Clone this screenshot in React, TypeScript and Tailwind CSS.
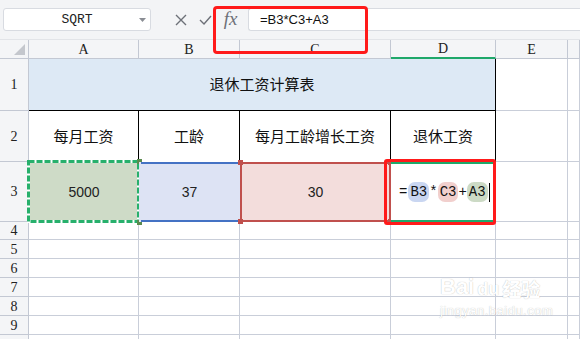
import React from "react"

const grid = "border-r border-b border-[#c9ced9]"
const head = "bg-[#f4f5f7] border-r border-b border-[#c3c8d3] flex items-center justify-center text-[14px] text-[#222] font-['Liberation_Serif',serif]"
const cjk = "font-['Noto_Sans_CJK_SC','Noto_Sans',sans-serif]"

function Handle({ className }: { className: string }) {
    return <div className={`absolute w-[5px] h-[5px] ${className}`} />
}

function Marquee() {
    return (
        <svg className="absolute left-[-2px] top-[-2px] w-[113px] h-[63px] overflow-visible" viewBox="0 0 113 63">
            <rect x="1.5" y="1.5" width="110" height="60" fill="none" stroke="#ffffff" strokeWidth="3" />
            <rect x="1.5" y="1.5" width="110" height="60" fill="none" stroke="#27b06c" strokeWidth="3" strokeDasharray="6 2" />
        </svg>
    )
}

export default function App() {
    const emptyRows = [4, 5, 6, 7, 8, 9, 0]
    return (
        <div className="relative w-[580px] h-[339px] overflow-hidden bg-white">
            {/* formula toolbar */}
            <div className="h-[40px] bg-[#f3f4f6] border-b border-[#e2e4e8] flex items-center">
                <div className="ml-[3px] w-[148px] h-[23px] bg-white border border-[#d8dbe1] rounded-[3px] flex items-center relative">
                    <span className="flex-1 text-center text-[13px] text-[#222] font-['Liberation_Mono',monospace]">SQRT</span>
                    <svg className="absolute right-[4px] top-[9px]" width="7" height="4" viewBox="0 0 7 4">
                        <path d="M0 0h7L3.5 4z" fill="#8a8d94" />
                    </svg>
                </div>
                <div className="w-[62px] flex items-center justify-end gap-[12px] pr-[1px]">
                    <svg width="12" height="12" viewBox="0 0 12 12" stroke="#6d7078" strokeWidth="1.4" fill="none">
                        <path d="M1 1l10 10M11 1L1 11" />
                    </svg>
                    <svg width="13" height="10" viewBox="0 0 13 10" stroke="#6d7078" strokeWidth="1.4" fill="none">
                        <path d="M1 5l4 4 7-8" />
                    </svg>
                </div>
                <div className="w-[35px] flex items-center justify-center italic text-[19px] text-[#6d7078] font-['Liberation_Serif',serif]">fx</div>
                <div className="flex-1 h-[23px] bg-white border-y border-l border-[#d8dbe1] rounded-l-[3px] flex items-center pl-[11px] text-[13px] text-[#111] font-['Liberation_Sans',sans-serif]">
                    =B3*C3+A3
                </div>
            </div>

            {/* sheet */}
            <div className="grid grid-cols-[29px_110px_101px_151px_105px_72px_1fr] grid-rows-[19px_52px_51px_60px_18px_19px_19px_19px_19px_19px_19px]">
                {/* column headers */}
                <div className={`${head} relative`}>
                    <svg className="absolute right-[3px] bottom-[3px]" width="11" height="11" viewBox="0 0 11 11">
                        <path d="M11 0v11H0z" fill="#c4c7cd" />
                    </svg>
                </div>
                <div className={head}>A</div>
                <div className={head}>B</div>
                <div className={head}>C</div>
                <div className={`${head} bg-[#d3d6de] text-[#1fa86a] border-b-[2px] border-b-[#1fa86a]`}>D</div>
                <div className={head}>E</div>
                <div className={head}></div>

                {/* row 1 */}
                <div className={head}>1</div>
                <div className={`col-span-4 bg-[#dde9f5] border-r border-b border-black flex items-center justify-center text-[15px] text-[#111] ${cjk}`}>
                    退休工资计算表
                </div>
                <div className={grid}></div>
                <div className={grid}></div>

                {/* row 2 */}
                <div className={head}>2</div>
                {["每月工资", "工龄", "每月工龄增长工资", "退休工资"].map((t) => (
                    <div key={t} className={`border-r border-black flex items-center justify-center text-[15px] text-[#111] ${cjk}`}>
                        {t}
                    </div>
                ))}
                <div className={grid}></div>
                <div className={grid}></div>

                {/* row 3 */}
                <div className={`${head} bg-[#d3d6de] text-[#1fa86a]`}>3</div>
                <div className="relative bg-[#cedbc7] flex items-center justify-center text-[14px] text-[#222] font-['Liberation_Sans',sans-serif]">
                    5000
                    <Marquee />
                    <Handle className="right-[-3px] top-[-3px] bg-[#5b8a4e]" />
                    <Handle className="right-[-3px] bottom-[-3px] bg-[#5b8a4e]" />
                </div>
                <div className="relative bg-[#dde3f4] flex items-center justify-center text-[14px] text-[#222] font-['Liberation_Sans',sans-serif]">
                    <div className="absolute inset-x-[2px] top-0 h-[2px] bg-[#4472c4]" />
                    <div className="absolute inset-x-[2px] bottom-0 h-[2px] bg-[#4472c4]" />
                    37
                </div>
                <div className="relative bg-[#f3dddc] border-2 border-[#c0504d] flex items-center justify-center text-[14px] text-[#222] font-['Liberation_Sans',sans-serif]">
                    30
                    <Handle className="left-[-4px] top-[-4px] bg-[#c0504d]" />
                    <Handle className="left-[-4px] bottom-[-4px] bg-[#c0504d]" />
                    <Handle className="right-[-4px] top-[-4px] bg-[#c0504d]" />
                    <Handle className="right-[-4px] bottom-[-4px] bg-[#c0504d]" />
                </div>
                <div className="relative border-y-[2px] border-[#1fa86a] bg-white flex items-center pl-[8px] text-[14px] text-[#111] font-['Liberation_Mono',monospace]">
                    <span className="pr-[1px]">=</span>
                    <span className="bg-[#c9d6f1] rounded-[7px] px-[2px] leading-[20px]">B3</span>
                    <span>*</span>
                    <span className="bg-[#f1cfcd] rounded-[7px] px-[2px] leading-[20px]">C3</span>
                    <span>+</span>
                    <span className="bg-[#ccdac5] rounded-[7px] px-[2px] leading-[20px]">A3</span>
                    <span className="shrink-0 w-[1px] h-[19px] bg-black ml-[1px]" />
                    <div className="absolute left-[-7px] top-[-5px] w-[112px] h-[66px] border-[3px] border-[#ff1a1a] rounded-[3px]" />
                </div>
                <div className={grid}></div>
                <div className={grid}></div>

                {/* empty rows */}
                {emptyRows.map((r) => (
                    <React.Fragment key={r}>
                        <div className={head}>{r > 0 ? r : ""}</div>
                        <div className={grid}></div>
                        <div className={grid}></div>
                        <div className={grid}></div>
                        <div className={grid}></div>
                        <div className={grid}></div>
                        <div className={grid}></div>
                    </React.Fragment>
                ))}
            </div>

            {/* red highlight around formula bar */}
            <div className="absolute left-[213px] top-[6px] w-[155px] h-[48px] border-[3px] border-[#ff1a1a] rounded-[4px]" />

            {/* watermark */}
            <div className="absolute left-[440px] top-[276px] text-white [text-shadow:0_0_1px_rgba(0,0,0,0.3)] font-['Liberation_Sans',sans-serif] select-none">
                <div className="flex items-end gap-[3px] text-[22px] font-bold leading-none">
                    <span>Bai</span>
                    <span className="text-[18px]">du</span>
                    <span className={`text-[19px] ${cjk}`}>经验</span>
                </div>
                <div className="text-[13px] leading-none mt-[6px] tracking-[0.5px]">jingyan.baidu.com</div>
            </div>
        </div>
    )
}
